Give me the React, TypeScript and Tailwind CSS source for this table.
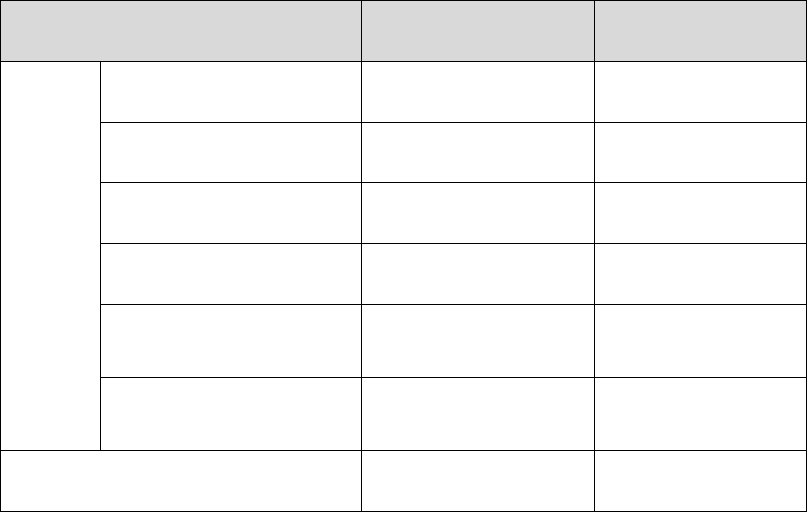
export default function App() {
  const cell = "bg-white";
  return (
    <div className="w-[807px] h-[512px] bg-white">
      <div className="grid w-[807px] grid-cols-[99px_260px_232px_211px] grid-rows-[60px_60px_59px_60px_60px_72px_72px_60px] gap-px bg-black p-px">
        <div className="col-span-2 bg-[#d9d9d9]" />
        <div className="bg-[#d9d9d9]" />
        <div className="bg-[#d9d9d9]" />
        <div className="row-span-6 bg-white" />
        {Array.from({ length: 6 }).map((_, i) => (
          <>
            <div key={`a${i}`} className={cell} />
            <div key={`b${i}`} className={cell} />
            <div key={`c${i}`} className={cell} />
          </>
        ))}
        <div className="col-span-2 bg-white" />
        <div className={cell} />
        <div className={cell} />
      </div>
    </div>
  );
}
